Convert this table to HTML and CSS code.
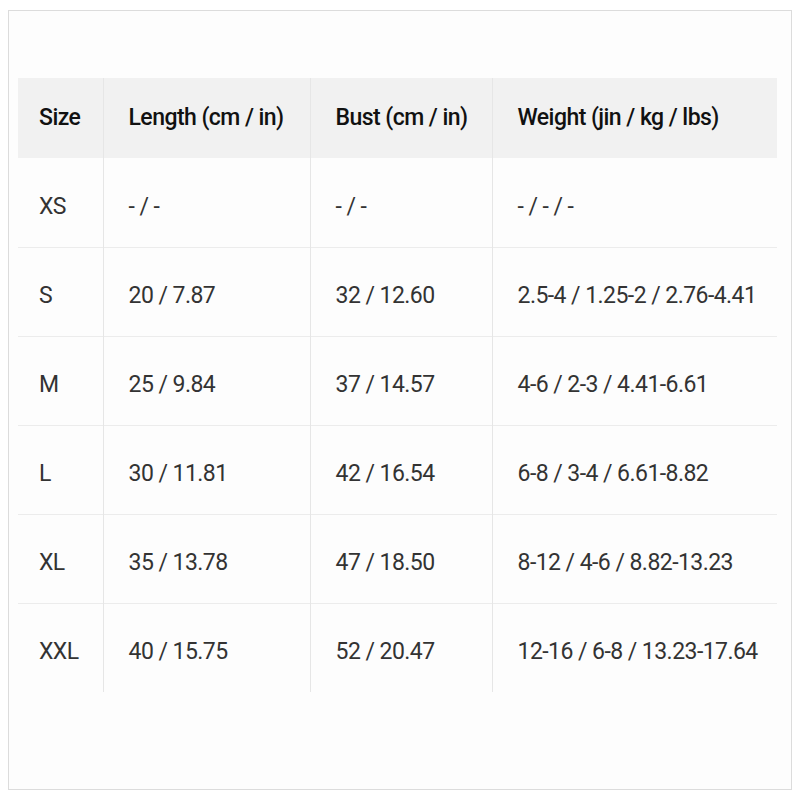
FILE: index.html
```html
<!DOCTYPE html>
<html>
<head>
<meta charset="utf-8">
<link rel="stylesheet" href="styles.css">
</head>
<body>
<div class="frame">
  <table class="sizes">
    <colgroup>
      <col class="c1"><col class="c2"><col class="c3"><col class="c4">
    </colgroup>
    <thead>
      <tr><th>Size</th><th>Length (cm / in)</th><th>Bust (cm / in)</th><th>Weight (jin / kg / lbs)</th></tr>
    </thead>
    <tbody>
      <tr><td>XS</td><td>- / -</td><td>- / -</td><td>- / - / -</td></tr>
      <tr><td>S</td><td>20 / 7.87</td><td>32 / 12.60</td><td>2.5-4 / 1.25-2 / 2.76-4.41</td></tr>
      <tr><td>M</td><td>25 / 9.84</td><td>37 / 14.57</td><td>4-6 / 2-3 / 4.41-6.61</td></tr>
      <tr><td>L</td><td>30 / 11.81</td><td>42 / 16.54</td><td>6-8 / 3-4 / 6.61-8.82</td></tr>
      <tr><td>XL</td><td>35 / 13.78</td><td>47 / 18.50</td><td>8-12 / 4-6 / 8.82-13.23</td></tr>
      <tr><td>XXL</td><td>40 / 15.75</td><td>52 / 20.47</td><td>12-16 / 6-8 / 13.23-17.64</td></tr>
    </tbody>
  </table>
</div>
</body>
</html>
```
FILE: styles.css
```css
html, body { margin: 0; padding: 0; background: #ffffff; }
body { font-family: Roboto, "Noto Sans", sans-serif; }
.frame {
  margin: 10px 8px;
  width: 784px;
  height: 780px;
  box-sizing: border-box;
  border: 1px solid #dcdcdc;
  padding: 67px 14px 0 9px;
  background: #fdfdfd;
}
.sizes {
  border-collapse: collapse;
  table-layout: fixed;
  width: 759px;
}
.c1 { width: 85px; }
.c2 { width: 207px; }
.c3 { width: 182px; }
.c4 { width: 285px; }
.sizes th, .sizes td {
  text-align: left;
  padding: 0 0 0 25px;
  font-size: 23px;
  letter-spacing: -0.55px;
  border-left: 1px solid #e6e6e6;
  white-space: nowrap;
}
.sizes th:first-child, .sizes td:first-child { border-left: none; padding-left: 21px; }
.sizes th {
  height: 78px;
  padding-bottom: 2px;
  background: #f1f1f1;
  color: #111;
  font-weight: 500;
}
.sizes td {
  height: 82px;
  color: #333;
  font-weight: 400;
  border-top: 1px solid #ececec;
  padding-top: 6px;
}
.sizes tbody tr:first-child td { border-top: none; padding-top: 7px; }
```
